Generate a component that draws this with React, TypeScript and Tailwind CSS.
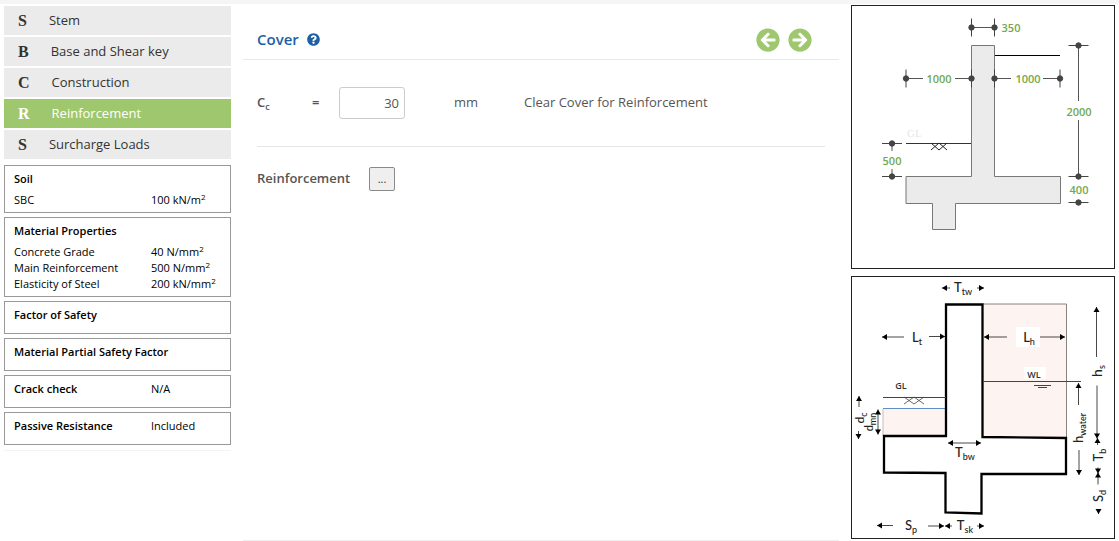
import { useState } from 'react';
import type { ReactNode } from 'react';
import { FaArrowCircleLeft, FaArrowCircleRight, FaQuestionCircle } from 'react-icons/fa';

interface Step {
  letter: string;
  label: string;
}

const steps: Step[] = [
  { letter: 'S', label: 'Stem' },
  { letter: 'B', label: 'Base and Shear key' },
  { letter: 'C', label: 'Construction' },
  { letter: 'R', label: 'Reinforcement' },
  { letter: 'S', label: 'Surcharge Loads' },
];

interface Property {
  name: string;
  value: string;
  unit: string;
}

const materials: Property[] = [
  { name: 'Concrete Grade', value: '40', unit: 'N/mm' },
  { name: 'Main Reinforcement', value: '500', unit: 'N/mm' },
  { name: 'Elasticity of Steel', value: '200', unit: 'kN/mm' },
];

function PropertyRow({ name, value, unit }: Property) {
  return (
    <div className="flex h-4 items-center">
      <dt className="w-[137px]">{name}</dt>
      <dd>
        {value} {unit}
        <sup className="text-[8px]">2</sup>
      </dd>
    </div>
  );
}

function Panel({ title, value, children }: { title: string; value?: string; children?: ReactNode }) {
  return (
    <section className="min-h-[33px] border border-[#999] bg-white px-[9px] py-1">
      <div className="flex h-[18px] items-center">
        <h2 className="w-[137px] whitespace-nowrap font-semibold">{title}</h2>
        {value && <span>{value}</span>}
      </div>
      {children}
    </section>
  );
}

function Sidebar() {
  const [active, setActive] = useState(3);

  return (
    <aside className="w-[227px] shrink-0 self-start border-b border-[#f3f3f3] pb-[5px] text-[11px] text-black">
      <nav className="mb-[6px] flex flex-col gap-[2px] pt-[2px] text-[13px]">
        {steps.map((step, i) => (
          <button
            key={i}
            type="button"
            onClick={() => setActive(i)}
            className={`flex h-[29px] items-center gap-[22px] px-[14px] text-left ${
              i === active ? 'bg-[#9fc76e] text-white' : 'bg-[#ebebeb] text-[#333]'
            }`}
          >
            <span className="font-['Liberation_Serif',serif] text-base font-bold">{step.letter}</span>
            <span>{step.label}</span>
          </button>
        ))}
      </nav>

      <div className="flex flex-col gap-1">
        <Panel title="Soil">
          <dl className="pt-1">
            <PropertyRow name="SBC" value="100" unit="kN/m" />
          </dl>
        </Panel>
        <Panel title="Material Properties">
          <dl className="pt-1">
            {materials.map((m) => (
              <PropertyRow key={m.name} {...m} />
            ))}
          </dl>
        </Panel>
        <Panel title="Factor of Safety" />
        <Panel title="Material Partial Safety Factor" />
        <Panel title="Crack check" value="N/A" />
        <Panel title="Passive Resistance" value="Included" />
      </div>
    </aside>
  );
}

function CoverForm() {
  const [cover, setCover] = useState('30');

  return (
    <main className="ml-3 mr-3 flex-1 border-b border-[#eee] text-[13px] text-[#555]">
      <header className="flex h-14 items-center justify-between border-b border-[#e8e8e8] pl-[14px] pr-[27px] pt-4">
        <h1 className="flex items-center gap-2 text-[15px] font-semibold text-[#1c5fa5]">
          Cover
          <button type="button" aria-label="Help">
            <FaQuestionCircle className="size-[13px]" />
          </button>
        </h1>
        <div className="flex gap-2 text-[#9fc76e]">
          <button type="button" aria-label="Previous">
            <FaArrowCircleLeft className="size-6" />
          </button>
          <button type="button" aria-label="Next">
            <FaArrowCircleRight className="size-6" />
          </button>
        </div>
      </header>

      <div className="px-[14px]">
        <div className="flex h-[87px] items-center border-b border-[#e5e5e5]">
          <label htmlFor="cover" className="w-[55px] font-semibold">
            C<sub className="text-[9px]">c</sub>
          </label>
          <span className="w-[27px] font-semibold">=</span>
          <div className="w-[115px]">
            <input
              id="cover"
              value={cover}
              onChange={(e) => setCover(e.target.value)}
              className="h-8 w-[66px] rounded-[3px] border border-[#ccc] bg-white px-[5px] text-right"
            />
          </div>
          <span className="w-[70px]">mm</span>
          <span>Clear Cover for Reinforcement</span>
        </div>

        <div className="flex h-[63px] items-center">
          <span className="w-28 font-semibold">Reinforcement</span>
          <button
            type="button"
            aria-label="Edit reinforcement"
            className="h-6 w-[26px] rounded-[2px] border border-[#8a8a8a] bg-[#efefef] text-[11px] leading-none text-[#333]"
          >
            ...
          </button>
        </div>
      </div>
    </main>
  );
}

// Dot with a tick through it, marks the end of a dimension line
function DimEnd({ x, y, vertical = false }: { x: number; y: number; vertical?: boolean }) {
  return (
    <g stroke="#444" fill="#444">
      {vertical ? <path d={`M${x - 10} ${y}h20`} /> : <path d={`M${x} ${y - 9}v18`} />}
      <circle cx={x} cy={y} r="2.7" />
    </g>
  );
}

function SectionDrawing() {
  return (
    <svg viewBox="852 6 262 262" className="block w-full" role="img" aria-label="Wall section with dimensions">
      <path
        d="M971.5 45.5H994.5V176.5H1060.5V203.5H955.5V229.5H932.5V203.5H906V176.5H971.5Z"
        fill="#ebebeb"
        stroke="#777"
      />
      <path d="M995 55.5H1060" stroke="#000" />
      <g stroke="#555" fill="none">
        <path d="M971.5 27.5H994.5M906 78.5H923M955 78.5H972M995 78.5H1011M1043 78.5H1060" />
        <path d="M1078.5 45V101M1078.5 120V177M892 144V151M892 169V177" />
        <path d="M906 143.5H971" stroke="#333" />
        <path d="M931 143L939 150M939 143L931 150M939 143L947 150M947 143L939 150" stroke="#222" />
      </g>
      <DimEnd x={971.5} y={27.5} />
      <DimEnd x={994.5} y={27.5} />
      <DimEnd x={906} y={78.5} />
      <DimEnd x={971.5} y={78.5} />
      <DimEnd x={994.5} y={78.5} />
      <DimEnd x={1060} y={78.5} />
      <DimEnd x={1078.5} y={45.5} vertical />
      <DimEnd x={1078.5} y={176.5} vertical />
      <DimEnd x={1078.5} y={202.5} vertical />
      <DimEnd x={892} y={143.5} vertical />
      <DimEnd x={892} y={176.5} vertical />
      <text x="907" y="137" fontSize="11" fill="#e6e6e6" fontFamily="Liberation Serif, serif">
        GL
      </text>
      <g fill="#73a84a" fontSize="11" fontWeight="600" textAnchor="middle">
        <text x="1011" y="32">350</text>
        <text x="939" y="83">1000</text>
        <text x="1028" y="83">1000</text>
        <text x="1079" y="116">2000</text>
        <text x="892" y="165">500</text>
        <text x="1079" y="194">400</text>
      </g>
    </svg>
  );
}

const heads = {
  left: 'l5 -3v6z',
  right: 'l-5 -3v6z',
  up: 'l-3 5h6z',
  down: 'l-3 -5h6z',
};

function Arrow({ x, y, to, length = 0 }: { x: number; y: number; to: keyof typeof heads; length?: number }) {
  const tail = {
    left: `h${length}`,
    right: `h${-length}`,
    up: `v${length}`,
    down: `v${-length}`,
  };
  return (
    <g>
      <path d={`M${x} ${y}${tail[to]}`} stroke="#333" strokeWidth="0.9" />
      <path d={`M${x} ${y}${heads[to]}`} fill="#000" />
    </g>
  );
}

interface SymbolProps {
  x: number;
  y: number;
  base: string;
  sub: string;
  size?: number;
  rotated?: boolean;
}

function Symbol({ x, y, base, sub, size = 13, rotated = false }: SymbolProps) {
  return (
    <text
      x={x}
      y={y}
      fontSize={size}
      fontWeight="500"
      textAnchor="middle"
      fill="#222"
      transform={rotated ? `rotate(-90 ${x} ${y})` : undefined}
    >
      {base}
      <tspan dy="3" fontSize="9">
        {sub}
      </tspan>
    </text>
  );
}

function NotationDrawing() {
  return (
    <svg
      viewBox="852 277 262 261"
      className="block w-full font-[Lato,sans-serif]"
      role="img"
      aria-label="Wall section notation"
    >
      {/* retained soil */}
      <path d="M983 304H1066V437H983Z" fill="#fdf3f1" />
      <path d="M983 304H1066.5V437" fill="none" stroke="#8a8280" />
      <path d="M883 409H945V436H883Z" fill="#fdf3f1" />
      <path d="M883 408.5H945" stroke="#5f8fc4" />
      <path d="M883 409V436" stroke="#c9bdba" />

      <path
        d="M946 304.5H982.5V437L1066 438V474H981.5V513.5L945.5 512.5V473L884 472.5V436H946Z"
        fill="#fff"
        stroke="#000"
        strokeWidth="2.3"
      />

      {/* ground and water levels */}
      <g fill="none" stroke="#444">
        <path d="M883 397.5H946M983 381.5H1081M1034 385.5H1051M1038 387.5H1047" />
        <path d="M904 397L914 404M914 397L904 404M914 397L924 404M924 397L914 404" strokeWidth="0.8" />
      </g>
      <path d="M1016 327H1040V347H1016ZM1024 367H1046V379H1024Z" fill="#fff" />

      <Arrow x={942} y={288} to="left" length={8} />
      <Arrow x={984} y={288} to="right" length={7} />
      <Arrow x={882} y={337} to="left" length={22} />
      <Arrow x={945} y={336.5} to="right" length={16} />
      <Arrow x={984} y={337} to="left" length={23} />
      <Arrow x={1065} y={337} to="right" length={25} />
      <Arrow x={1096.5} y={307} to="up" length={50} />
      <Arrow x={1097} y={438.5} to="down" length={53} />
      <Arrow x={1097.5} y={438} to="up" length={7} />
      <Arrow x={1098} y={473.5} to="down" length={6} />
      <Arrow x={1098} y={472.5} to="up" length={12} />
      <Arrow x={1098.5} y={514} to="down" length={5} />
      <Arrow x={1078.5} y={383} to="up" length={22} />
      <Arrow x={1079} y={475} to="down" length={25} />
      <Arrow x={859} y={396} to="up" length={11} />
      <Arrow x={858.5} y={439} to="down" length={8} />
      <Arrow x={878} y={409.5} to="up" length={24} />
      <Arrow x={878} y={434.5} to="down" length={5} />
      <Arrow x={948} y={443} to="left" length={32} />
      <Arrow x={981} y={443} to="right" length={5} />
      <Arrow x={877} y={525.5} to="left" length={16} />
      <Arrow x={944} y={526} to="right" length={16} />
      <Arrow x={945} y={526} to="left" length={7} />
      <Arrow x={984} y={526} to="right" length={7} />

      <Symbol x={963} y={292} base="T" sub="tw" />
      <Symbol x={917} y={342} base="L" sub="t" />
      <Symbol x={1029} y={342} base="L" sub="h" />
      <Symbol x={965} y={457} base="T" sub="bw" />
      <Symbol x={911} y={530} base="S" sub="p" />
      <Symbol x={965} y={530} base="T" sub="sk" />
      <Symbol x={1102} y={371} base="h" sub="s" size={14} rotated />
      <Symbol x={1083} y={428} base="h" sub="water" rotated />
      <Symbol x={1103} y={455} base="T" sub="b" rotated />
      <Symbol x={1103} y={496} base="S" sub="d" rotated />
      <Symbol x={864} y={418} base="d" sub="c" size={12} rotated />
      <Symbol x={873} y={422} base="d" sub="mn" size={11} rotated />
      <g fontSize="9" fontWeight="600" fill="#333" fontFamily="Open Sans, sans-serif" textAnchor="middle">
        <text x="901" y="389">GL</text>
        <text x="1034" y="378">WL</text>
      </g>
    </svg>
  );
}

export default function App() {
  return (
    <div className="min-h-screen border-t-4 border-[#f5f5f5] bg-white font-['Open_Sans',sans-serif]">
      <div className="flex min-h-[537px] pl-1 pr-1">
        <Sidebar />
        <CoverForm />
        <div className="flex w-[264px] shrink-0 flex-col gap-[7px] pt-px">
          <figure className="border border-[#222]">
            <SectionDrawing />
          </figure>
          <figure className="border border-[#222]">
            <NotationDrawing />
          </figure>
        </div>
      </div>
    </div>
  );
}
